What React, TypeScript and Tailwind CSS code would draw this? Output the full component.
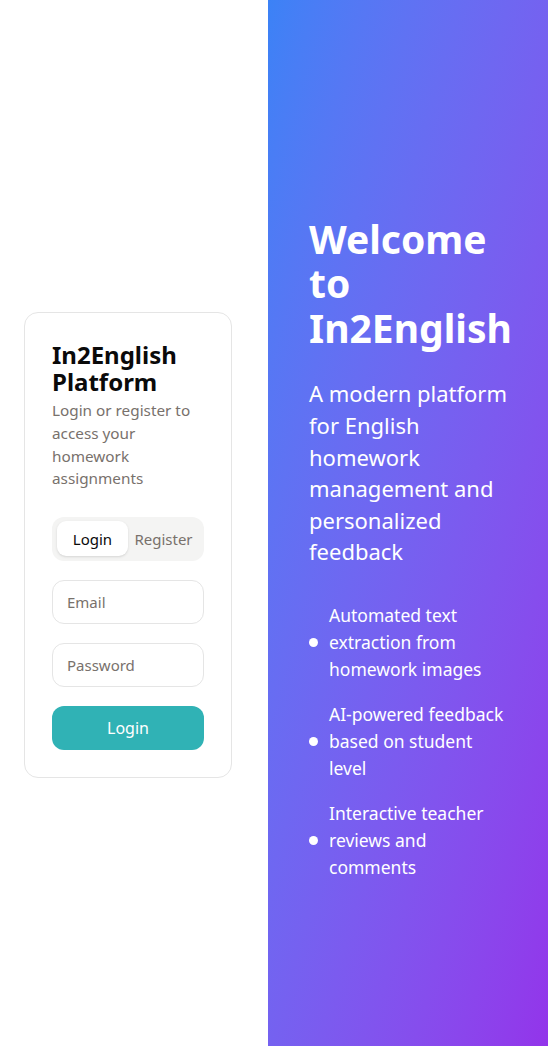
import React from "react";

const font = { fontFamily: '"Noto Sans", "Noto Sans CJK KR", sans-serif' };

export default function App() {
  const features = [
    "Automated text extraction from homework images",
    "AI-powered feedback based on student level",
    "Interactive teacher reviews and comments",
  ];
  return (
    <div className="flex min-h-screen w-full bg-white" style={font}>
      <div className="flex w-[268px] shrink-0 items-center px-6 pt-[44px]">
        <div className="w-[208px] rounded-[14px] border border-[#e5e5e5] bg-white px-[27px] pt-[28px] pb-[27px]">
          <h1 className="text-[24px] font-bold leading-[27px] text-[#0a0a0a]">In2English Platform</h1>
          <p className="mt-[4px] text-[15.3px] leading-[22.7px] text-[#78716c]">
            Login or register to access your homework assignments
          </p>
          <div className="mt-[27px] flex h-[44px] items-center rounded-[12px] bg-[#f4f4f3] p-[5px]">
            <button className="h-[35px] w-[71px] rounded-[9px] bg-white text-[15px] text-[#0a0a0a] shadow-sm">
              Login
            </button>
            <button className="h-[35px] flex-1 text-[15px] text-[#78716c]">Register</button>
          </div>
          <div className="mt-[19px] flex flex-col gap-[19px]">
            <div className="flex h-[44px] items-center rounded-[12px] border border-[#e5e5e5] px-[14px] text-[15px] text-[#78716c]">
              Email
            </div>
            <div className="flex h-[44px] items-center rounded-[12px] border border-[#e5e5e5] px-[14px] text-[15px] text-[#78716c]">
              Password
            </div>
            <button className="h-[44px] rounded-[12px] bg-[#30b2b5] text-[16px] text-white">Login</button>
          </div>
        </div>
      </div>
      <div className="flex flex-1 items-center bg-gradient-to-br from-[#3b82f6] to-[#9333ea] px-[41px] pt-[52px] text-white">
        <div>
          <h2 className="text-[39px] font-bold leading-[44.5px]">Welcome to In2English</h2>
          <p className="mt-[28px] text-[22px] leading-[31.6px]">
            A modern platform for English homework management and personalized feedback
          </p>
          <ul className="mt-[34px] flex flex-col gap-[18px]">
            {features.map((f) => (
              <li key={f} className="flex items-center gap-[11px]">
                <span className="h-[9px] w-[9px] shrink-0 rounded-full bg-white" />
                <span className="text-[17.5px] leading-[27px]">{f}</span>
              </li>
            ))}
          </ul>
        </div>
      </div>
    </div>
  );
}
